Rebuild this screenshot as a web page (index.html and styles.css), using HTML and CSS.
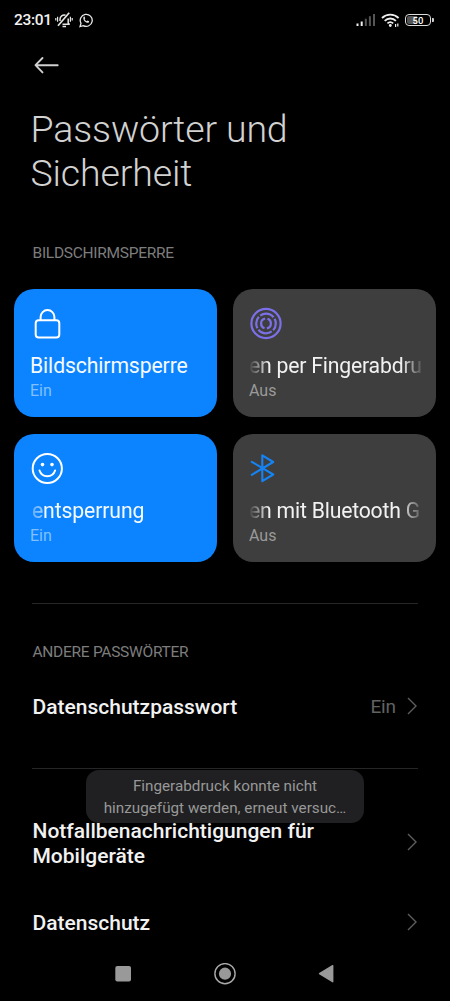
FILE: index.html
```html
<!DOCTYPE html>
<html lang="de">
<head>
<meta charset="utf-8">
<meta name="viewport" content="width=device-width, initial-scale=1">
<title>Passwörter und Sicherheit</title>
<link rel="stylesheet" href="styles.css">
</head>
<body>
<div class="screen">
  <header class="status">
    <span class="clock">23:01</span>
    <svg class="bell" width="18" height="16" viewBox="0 0 18 16" fill="none" stroke="#e6e6e6" stroke-width="1.500">
      <path d="M7.500 12.200h7.300M5 9V7.200a4.200 4.200 0 0 1 5.500-4M13.200 6.500V11l1.200 1.200M7.500 14.600h3.500"/>
      <path d="M2.600 4.800v5M.8 6v2.600M15.400 4.800v5M17.200 6v2.600" stroke-width="1.200"/>
      <path d="M3 13.800 14.200.8" stroke-width="1.700"/>
    </svg>
    <svg class="chat" width="14" height="15" viewBox="0 0 14 15">
      <path d="M1 13.600 2 10.300A6 6 0 1 1 4.300 12.600Z" fill="none" stroke="#e6e6e6" stroke-width="1.300"/>
      <path d="M4.500 4c.5-.6 1-.4 1.200 0l.5 1.300-.6.900c.5 1 1.200 1.600 2.200 2l.8-.8 1.500.8c.2 1-.8 1.700-1.800 1.600C6 9.400 3.700 6.800 4.500 4Z" fill="#e6e6e6"/>
    </svg>
    <span class="spacer"></span>
    <svg class="signal" width="20" height="14" viewBox="0 0 20 14">
      <path d="M.5 10.500h2V13h-2zM4.700 8.500h2V13h-2z" fill="#f0f0f0"/>
      <path d="M8.800 5.800h2V13h-2zM12.900 3.200h2V13h-2zM17 1h2v12h-2z" fill="#555"/>
    </svg>
    <svg class="wifi" width="19" height="15" viewBox="0 0 19 15" fill="none" stroke="#efefef" stroke-width="1.800">
      <path d="M1 5a12 12 0 0 1 16.600 0M3.700 7.800a8 8 0 0 1 11.200 0M6.400 10.400a4.400 4.400 0 0 1 5.800 0"/>
      <circle cx="9.300" cy="12.500" r="1.400" fill="#efefef" stroke="none"/>
      <path d="M14.600 11v3M16.800 10.500v3" stroke-width="1.200"/>
    </svg>
    <span class="battery"><span class="charge">50</span></span>
  </header>

  <nav class="back">
    <svg width="26" height="18" viewBox="0 0 26 18" fill="none" stroke="#d0d0d0" stroke-width="1.900" stroke-linecap="round" stroke-linejoin="round"><path d="M23.700 9.200H1.700M8.500 2 1.500 9.200 8.500 16.400"/></svg>
  </nav>
  <h1 class="title">Passwörter und<br>Sicherheit</h1>

  <h2 class="label label-lock">BILDSCHIRMSPERRE</h2>
  <section class="tiles">
    <article class="tile on">
      <svg class="icon" width="34" height="34" viewBox="0 0 34 34" fill="none" stroke="#fff" stroke-width="2"><rect x="5.700" y="13.200" width="23.600" height="17.300" rx="3"/><path d="M10.600 13V10a6.900 6.900 0 0 1 13.800 0v3"/></svg>
      <span class="name">Bildschirmsperre</span>
      <span class="state">Ein</span>
    </article>
    <article class="tile">
      <svg class="icon" width="34" height="34" viewBox="0 0 34 34" fill="none" stroke="#7b70e8" stroke-width="2.200">
        <circle cx="17" cy="16.500" r="14.600"/>
        <circle cx="17" cy="16.500" r="9.800" pathLength="100" stroke-dasharray="20 3 24 3 20 3 24 3" stroke-dashoffset="8"/>
        <circle cx="17" cy="16.500" r="4.900" pathLength="100" stroke-dasharray="42 8 42 8" stroke-dashoffset="20"/>
      </svg>
      <span class="name fade-both">en per Fingerabdru</span>
      <span class="state">Aus</span>
    </article>
    <article class="tile on">
      <svg class="icon" width="34" height="34" viewBox="0 0 34 34" fill="none" stroke="#fff" stroke-width="2" stroke-linecap="round"><circle cx="17.300" cy="16.500" r="14.600"/><path d="M9.500 18.500a8.200 8.200 0 0 0 15.600 0"/><circle cx="12.500" cy="12.600" r="1.800" fill="#fff" stroke="none"/><circle cx="22" cy="12.600" r="1.800" fill="#fff" stroke="none"/></svg>
      <span class="name fade-start">entsperrung</span>
      <span class="state">Ein</span>
    </article>
    <article class="tile">
      <svg class="icon" width="34" height="34" viewBox="0 0 34 34" fill="none" stroke="#1583f3" stroke-width="2.100" stroke-linecap="round" stroke-linejoin="round"><path d="M2.800 9.800 24.200 22.500 13.300 29.200V3.300L24.200 10 2.800 22.800"/></svg>
      <span class="name fade-both">en mit Bluetooth G</span>
      <span class="state">Aus</span>
    </article>
  </section>

  <hr class="rule rule-a">
  <h2 class="label label-other">ANDERE PASSWÖRTER</h2>
  <div class="row row-pass">
    <span class="row-name">Datenschutzpasswort</span>
    <span class="value">Ein</span>
    <svg class="chev" width="10" height="18" viewBox="0 0 10 18"><path d="M1 1 9 9 1 17"/></svg>
  </div>
  <hr class="rule">
  <div class="row row-alert">
    <span class="row-name">Notfallbenachrichtigungen für<br>Mobilgeräte</span>
    <svg class="chev" width="10" height="18" viewBox="0 0 10 18"><path d="M1 1 9 9 1 17"/></svg>
  </div>
  <div class="row row-privacy">
    <span class="row-name">Datenschutz</span>
    <svg class="chev" width="10" height="18" viewBox="0 0 10 18"><path d="M1 1 9 9 1 17"/></svg>
  </div>

  <footer class="navbar">
    <svg width="22" height="22" viewBox="0 0 22 22" fill="#999"><rect x="3.300" y="3" width="15.700" height="15.500" rx="2"/></svg>
    <svg width="22" height="22" viewBox="0 0 22 22"><circle cx="11" cy="10.700" r="10.100" fill="none" stroke="#aaa" stroke-width="1.400"/><circle cx="11" cy="10.700" r="6.100" fill="#999"/></svg>
    <svg width="22" height="22" viewBox="0 0 22 22"><path d="M4.500 10.700 17.700 2.700V18.700Z" fill="#999" stroke="#999" stroke-width="1.400" stroke-linejoin="round"/></svg>
  </footer>

  <div class="toast"><span>Fingerabdruck konnte nicht</span><span>hinzugefügt werden, erneut versuc…</span></div>
</div>
</body>
</html>
```
FILE: styles.css
```css
* { box-sizing: border-box; }
body { margin: 0; background: #000; font-family: Roboto, "Noto Sans", sans-serif; }
svg { display: block; flex: none; }
.screen { position: relative; width: 450px; height: 1001px; overflow: hidden; display: flex; flex-direction: column; background: #000; }
.screen > * { flex: none; }

.status { height: 40px; padding: 0 17px 0 14px; display: flex; align-items: center; }
.clock { color: #f2f2f2; font-size: 15.500px; font-weight: 500; line-height: 20px; letter-spacing: -.3px; width: 41px; white-space: nowrap; }
.bell { margin-right: 6px; }
.spacer { flex: 1; }
.signal { margin-right: 5px; }
.wifi { margin-right: 5px; }
.battery { position: relative; width: 26px; height: 12px; border: 1.500px solid #ddd; border-radius: 4px; background: linear-gradient(90deg, #555 45%, #000 45%) content-box; padding: 1px; margin-right: 2px; }
.battery::after { content: ""; position: absolute; right: -4px; top: 3px; width: 2px; height: 4px; background: #ccc; border-radius: 0 1px 1px 0; }
.charge { display: block; text-align: center; color: #fff; font-size: 9.500px; font-weight: 500; line-height: 9px; }

.back { height: 67px; padding: 16px 0 0 34px; }
.title { margin: 0; padding-left: 30.500px; height: 136px; font-size: 37.500px; font-weight: 300; line-height: 44px; letter-spacing: -.15px; color: #d2d2d2; white-space: nowrap; }
.label { margin: 0; padding-left: 32.500px; font-size: 15.500px; font-weight: 400; line-height: 20px; letter-spacing: -.28px; color: #7d7d7d; white-space: nowrap; }
.label-lock { height: 46px; }

.tiles { padding: 0 14px; display: grid; grid-template-columns: 203px 203px; grid-template-rows: 128px 128px; gap: 17px 16px; }
.tile { display: flex; flex-direction: column; border-radius: 20px; padding: 18px 16px 0; background: #3e3e3e; color: #f2f2f2; }
.on { background: #0d84ff; color: #f5faff; }
.name { margin-top: 11px; width: 173px; height: 28px; font-size: 21.200px; line-height: 27px; letter-spacing: -.2px; white-space: nowrap; overflow: hidden; }
.on .name { letter-spacing: -.12px; }
.fade-both { -webkit-mask-image: linear-gradient(90deg, transparent, #000 20px, #000 152px, rgba(0,0,0,.1)); mask-image: linear-gradient(90deg, transparent, #000 20px, #000 152px, rgba(0,0,0,.1)); }
.fade-start { padding-left: 2px; -webkit-mask-image: linear-gradient(90deg, rgba(0,0,0,.3), rgba(0,0,0,.6) 12px, #000 14px); mask-image: linear-gradient(90deg, rgba(0,0,0,.3), rgba(0,0,0,.6) 12px, #000 14px); }
.state { padding-top: 1px; font-size: 16px; line-height: 20px; color: #9a9a9a; }
.on .state { color: #80c0ff; }

.rule { width: 386px; height: 1px; margin: 0 0 0 32px; border: 0; background: #262626; }
.rule-a { margin-top: 41px; }
.label-other { margin-top: 38px; height: 21px; }
.row { display: flex; align-items: center; padding: 0 33px 0 32.500px; }
.row-name { flex: 1; padding-top: 2px; color: #f2f2f2; font-size: 21px; font-weight: 500; line-height: 25px; white-space: nowrap; }
.value { margin-right: 11px; padding-top: 1px; color: #626262; font-size: 19px; line-height: 24px; letter-spacing: -.1px; }
.chev { fill: none; stroke: #5d5d5d; stroke-width: 1.400; }
.row-pass { height: 86px; margin-bottom: 19px; }
.row-alert { height: 83px; margin: 31px 0 2px; }
.row-alert .row-name { padding-top: 5px; }
.row-privacy { height: 74px; }
.row-privacy .row-name { padding-top: 3px; }

.navbar { position: absolute; left: 0; right: 0; bottom: 0; height: 56px; padding: 18px 113px 0 112px; display: flex; justify-content: space-between; }
.toast { position: absolute; left: 86px; top: 770px; width: 278px; height: 53px; border-radius: 13px; background: #202022; color: #989898; font-size: 15.250px; line-height: 22px; padding-top: 5px; display: flex; flex-direction: column; align-items: center; white-space: nowrap; }
```
